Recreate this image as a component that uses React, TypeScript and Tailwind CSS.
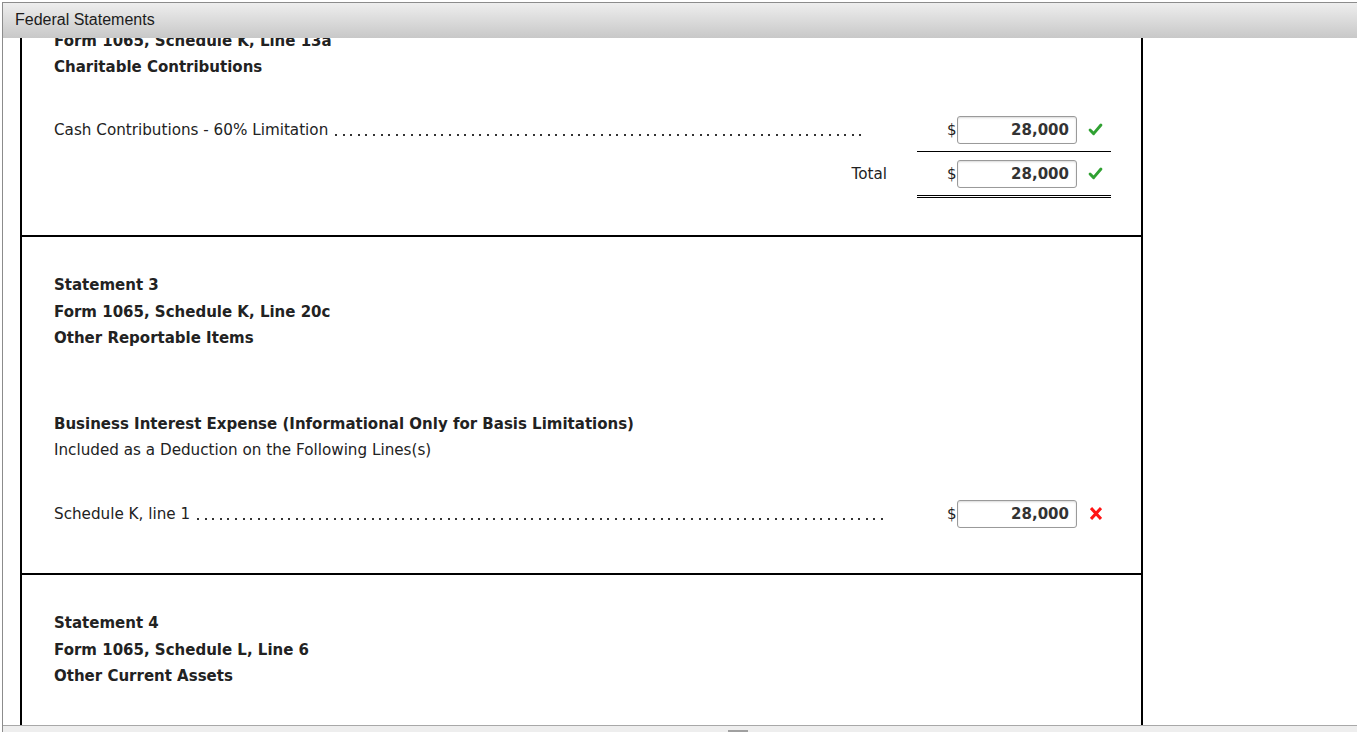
import React from 'react'

const font = { fontFamily: '"DejaVu Sans", Verdana, sans-serif' }

const Check = () => (
    <svg className="w-[15px] h-[15px]" viewBox="0 0 16 16">
        <path d="M2.2 8.6 L6 12.4 L13.8 3.2" fill="none" stroke="#30a132" strokeWidth="3.1" strokeLinecap="round" strokeLinejoin="round" />
    </svg>
)

const Cross = () => (
    <svg className="w-[12px] h-[13px]" viewBox="0 0 12 13">
        <path d="M1 1 L11 12 M11 1 L1 12" fill="none" stroke="#ff1414" strokeWidth="3" />
    </svg>
)

const Amount = ({ value, ok }: { value: string; ok: boolean }) => (
    <div className="w-[194px] flex items-center pl-[30px]">
        <span className="w-[10px] text-[15px] text-[#222] pt-[2px]">$</span>
        <div className="w-[120px] h-[28px] border border-[#9a9a9a] rounded-[3px] shadow-[inset_0_1px_2px_rgba(0,0,0,0.15)] flex items-center justify-end pr-[7px] pt-[2px] font-bold text-[15px] text-[#333]">
            {value}
        </div>
        <div className="ml-[11px] w-[15px] flex items-center justify-center">
            {ok ? <Check /> : <Cross />}
        </div>
    </div>
)

// dot leader between a label and its amount
const Dots = () => (
    <span className="flex-1 ml-[7px] mt-[10px] h-[2px] bg-[repeating-linear-gradient(to_right,#333_0px,#333_2px,transparent_2px,transparent_7.6px)]" />
)

const Row = ({ label, pr, value, ok }: { label: string; pr: string; value: string; ok: boolean }) => (
    <div className="flex items-center h-[28px]">
        <div className={`flex-1 flex items-center min-w-0 pt-[2px] ${pr}`}>
            <span className="whitespace-nowrap">{label}</span>
            <Dots />
        </div>
        <Amount value={value} ok={ok} />
    </div>
)

const Heading = ({ lines }: { lines: string[] }) => (
    <div className="font-bold text-[15px]">
        {lines.map((l) => (
            <div key={l} className="h-[26.5px] leading-[26.5px] pt-[1.5px]">{l}</div>
        ))}
    </div>
)

export default function App() {
    return (
        <div className="w-[1357px] h-[732px] overflow-hidden bg-white pt-[2px] pl-[2px]">
            <div className="h-[730px] flex flex-col border-l border-t border-[#8c8c8c]">
                <div className="h-[35px] shrink-0 bg-gradient-to-b from-[#eeeeee] to-[#c8c8c8] flex items-center pl-[12px] pb-[1px]" style={{ fontFamily: '"Liberation Sans", Arial, sans-serif' }}>
                    <span className="text-[16px] text-[#1c1c1c]">Federal Statements</span>
                </div>
                <div className="flex-1 overflow-hidden pl-[17px]">
                    <div className="w-[1123px] border-x-2 border-black text-[15.2px] text-[#222] -mt-[12px]" style={font}>
                        {/* Statement 2 (scrolled) */}
                        <div className="pl-[32px] pr-[30px] border-b-2 border-black pb-[37px]">
                            <Heading lines={['Form 1065, Schedule K, Line 13a', 'Charitable Contributions']} />
                            <div className="mt-[36.5px]">
                                <Row label="Cash Contributions - 60% Limitation" pr="pr-[50px]" value="28,000" ok />
                            </div>
                            <div className="flex justify-end">
                                <div className="w-[194px] mt-[7px] border-t border-black" />
                            </div>
                            <div className="mt-[8px] flex items-center h-[28px]">
                                <div className="flex-1 text-right pr-[30px] pt-[2px]">Total</div>
                                <Amount value="28,000" ok />
                            </div>
                            <div className="flex justify-end">
                                <div className="w-[194px] mt-[7px] h-[3px] border-y border-black" />
                            </div>
                        </div>
                        {/* Statement 3 */}
                        <div className="pl-[32px] pr-[30px] border-b-2 border-black pt-[34px] pb-[45px]">
                            <Heading lines={['Statement 3', 'Form 1065, Schedule K, Line 20c', 'Other Reportable Items']} />
                            <div className="mt-[59px]">
                                <div className="h-[26.5px] leading-[26.5px] pt-[1.5px] font-bold text-[15px]">Business Interest Expense (Informational Only for Basis Limitations)</div>
                                <div className="h-[26.5px] leading-[26.5px] pt-[1.5px]">Included as a Deduction on the Following Lines(s)</div>
                            </div>
                            <div className="mt-[37.5px]">
                                <Row label="Schedule K, line 1" pr="pr-[30px]" value="28,000" ok={false} />
                            </div>
                        </div>
                        {/* Statement 4 */}
                        <div className="pl-[32px] pr-[30px] pt-[34px] pb-[200px]">
                            <Heading lines={['Statement 4', 'Form 1065, Schedule L, Line 6', 'Other Current Assets']} />
                        </div>
                    </div>
                </div>
                <div className="h-[7px] shrink-0 border-t border-[#a8a8a8] bg-[#eeeeee] flex justify-center items-end">
                    <div className="w-[20px] h-[2px] bg-[#a0a0a0] ml-[116px]" />
                </div>
            </div>
        </div>
    )
}
